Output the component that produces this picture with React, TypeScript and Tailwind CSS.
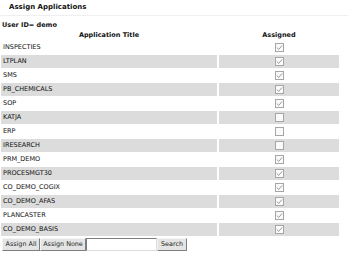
import React from 'react';

const apps: { name: string; assigned: boolean }[] = [
  { name: 'INSPECTIES', assigned: true },
  { name: 'LTPLAN', assigned: true },
  { name: 'SMS', assigned: true },
  { name: 'PB_CHEMICALS', assigned: true },
  { name: 'SOP', assigned: true },
  { name: 'KATJA', assigned: false },
  { name: 'ERP', assigned: false },
  { name: 'IRESEARCH', assigned: false },
  { name: 'PRM_DEMO', assigned: true },
  { name: 'PROCESMGT30', assigned: true },
  { name: 'CO_DEMO_COGIX', assigned: true },
  { name: 'CO_DEMO_AFAS', assigned: true },
  { name: 'PLANCASTER', assigned: true },
  { name: 'CO_DEMO_BASIS', assigned: true },
];

function Check({ on }: { on: boolean }) {
  return (
    <span className="w-[9px] h-[9px] border border-[#a6a6a6] bg-[#fafafa] flex items-center justify-center">
      {on && (
        <svg width="7" height="7" viewBox="0 0 7 7" fill="none">
          <path d="M0.8 3.6 L2.7 5.4 L6.2 1.4" stroke="#8f8f8f" strokeWidth="0.9" />
        </svg>
      )}
    </span>
  );
}

const btn =
  'h-[13px] border border-[#7d7d7d] border-t-[#f4f4f4] border-l-[#f4f4f4] bg-[#e4e4e4] text-[6.4px] text-[#222] flex items-center justify-center';

export default function App() {
  return (
    <div className="w-[348px] h-[268px] bg-white text-[#111] font-['DejaVu_Sans',Verdana,sans-serif] text-[6.5px] leading-none">
      <div className="h-[16px] border-b border-[#efefef] flex items-center pl-[9px]">
        <span className="font-bold text-[7px]">Assign Applications</span>
      </div>

      <div className="px-[1px]">
        <div className="pl-[1px] pt-[6px] h-[14px] font-bold">User ID= demo</div>

        <div className="flex w-[338px] gap-[2px] h-[10px] items-center font-bold">
          <div className="w-[216px] text-center">Application Title</div>
          <div className="w-[120px] text-center">Assigned</div>
        </div>

        <div className="flex flex-col gap-[1px] mt-[1px]">
          {apps.map((a, i) => (
            <div key={a.name} className="flex w-[338px] gap-[2px] h-[13px]">
              <div className={`w-[216px] flex items-center pl-[2px] ${i % 2 === 1 ? 'bg-[#dcdcdc]' : ''}`}>
                {a.name}
              </div>
              <div className={`w-[120px] flex items-center justify-center ${i % 2 === 1 ? 'bg-[#dcdcdc]' : ''}`}>
                <Check on={a.assigned} />
              </div>
            </div>
          ))}
        </div>

        <div className="flex mt-[2px] pl-[1px]">
          <button className={`${btn} w-[38px]`}>Assign All</button>
          <button className={`${btn} w-[46px]`}>Assign None</button>
          <input className="h-[13px] w-[71px] border border-[#7d7d7d] border-b-[#dcdcdc] border-r-[#dcdcdc] bg-white outline-none" />
          <button className={`${btn} w-[30px]`}>Search</button>
        </div>
      </div>
    </div>
  );
}
